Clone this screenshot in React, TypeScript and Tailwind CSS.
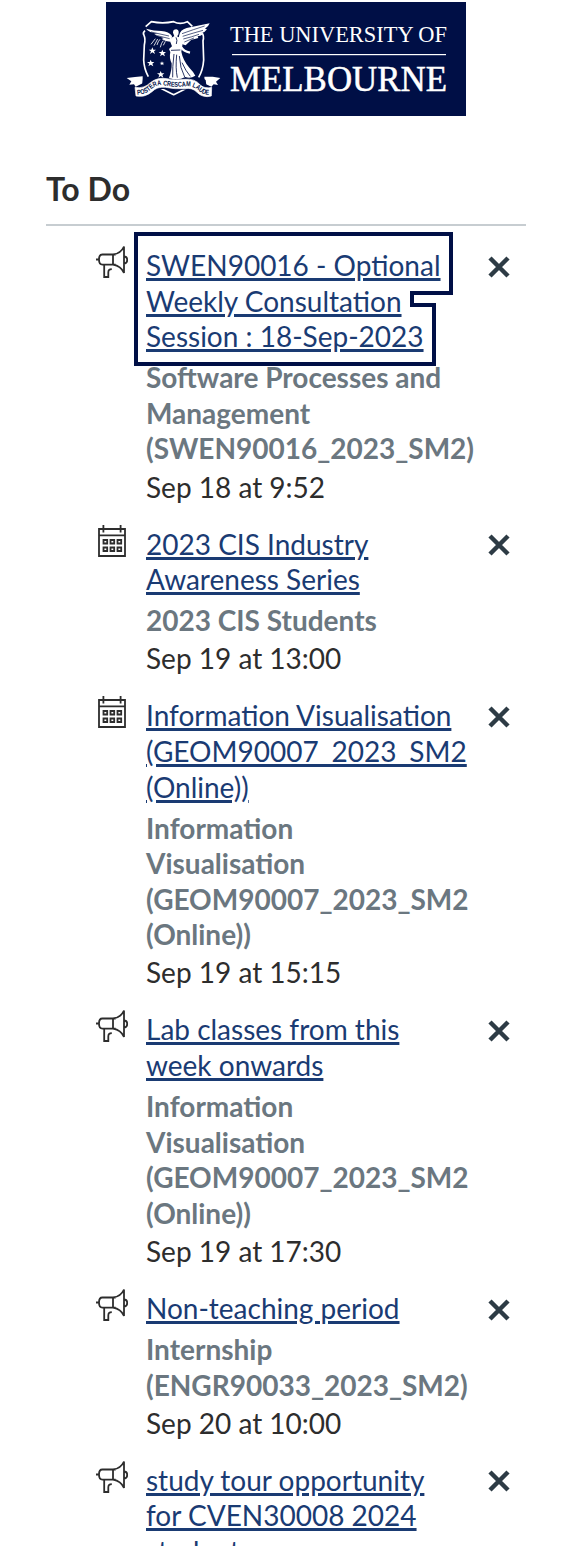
import React from "react";

type Kind = "announcement" | "event";

interface TodoItem {
  kind: Kind;
  title: string[];
  course: string[];
  date: string;
  focused?: boolean;
}

const items: TodoItem[] = [
  {
    kind: "announcement",
    title: ["SWEN90016 - Optional", "Weekly Consultation", "Session : 18-Sep-2023"],
    course: ["Software Processes and", "Management", "(SWEN90016_2023_SM2)"],
    date: "Sep 18 at 9:52",
    focused: true,
  },
  {
    kind: "event",
    title: ["2023 CIS Industry", "Awareness Series"],
    course: ["2023 CIS Students"],
    date: "Sep 19 at 13:00",
  },
  {
    kind: "event",
    title: ["Information Visualisation", "(GEOM90007_2023_SM2", "(Online))"],
    course: ["Information", "Visualisation", "(GEOM90007_2023_SM2", "(Online))"],
    date: "Sep 19 at 15:15",
  },
  {
    kind: "announcement",
    title: ["Lab classes from this", "week onwards"],
    course: ["Information", "Visualisation", "(GEOM90007_2023_SM2", "(Online))"],
    date: "Sep 19 at 17:30",
  },
  {
    kind: "announcement",
    title: ["Non-teaching period"],
    course: ["Internship", "(ENGR90033_2023_SM2)"],
    date: "Sep 20 at 10:00",
  },
  {
    kind: "announcement",
    title: ["study tour opportunity", "for CVEN30008 2024", "students"],
    course: [],
    date: "",
  },
];

function Logo() {
  return (
    <svg className="block h-[114px] w-[360px] bg-[#000f46]" viewBox="0 0 360 114" role="img" aria-label="The University of Melbourne">
      <g transform="translate(-6 -2) scale(0.33333)" fill="none" stroke="#fff" strokeLinejoin="round">
        <path d="M137 80 L154 65 Q188 72 221 65 Q240 75 262 65 L277 79 M135 92 Q127 99 132 106 Q137 116 133 135 L131 180 Q132 206 145 230 M306 98 Q313 108 309 122 L311 180 Q309 210 296 232 M182 265 L221 284 L260 265" strokeWidth="5" />
        <path d="M214 125 Q198 126 185 117 L191 114 Q174 110 163 103 L173 102 Q147 97 138 86 Q162 93 184 93 Q207 95 216 108 Z" fill="#fff" stroke="none" />
        <path d="M237 108 Q240 89 260 84 L329 70 Q325 81 315 86 L321 88 Q315 97 305 99 L309 103 Q301 109 293 109 L295 114 Q284 118 274 119 L257 136 L237 130 Z" fill="#fff" stroke="none" />
        <path d="M246 101 Q282 88 314 78 M248 109 Q280 99 309 91 M250 117 Q275 111 297 103 M253 126 L282 114 M153 96 L207 108 M172 107 L209 116" stroke="#000f46" strokeWidth="2" />
        <path d="M219 98 Q219 88 229 88 Q237 90 236 99 Q236 105 231 109 L240 113 Q250 122 247 137 L244 155 Q249 181 268 203 Q280 215 286 227 Q271 237 256 231 Q234 243 207 234 Q216 210 215 190 Q207 174 211 156 L207 147 L216 139 L211 126 Q211 113 223 109 Z" fill="#fff" stroke="none" />
        <path d="M244 142 Q250 154 270 158" strokeWidth="7" />
        <path d="M222 162 Q217 202 218 232 M230 164 Q226 205 232 233 M238 168 Q240 205 254 231 M246 188 Q257 213 271 229 M228 112 Q233 120 229 132 M213 151 L241 150" stroke="#000f46" strokeWidth="2.500" />
        <path d="M180 118 Q174 124 171 135 M190 122 Q184 128 181 142 M196 124 L190 136 M166 116 L153 133 M173 117 L162 137" strokeWidth="2.500" />
        <g fill="#fff" stroke="none">
          <path d="M157 142 l3 7 8 0 -6 5 3 8 -8-5 -7 5 3-8 -7-5 8 0z" />
          <path d="M187 149 l3 7 8 0 -6 5 3 8 -8-5 -7 5 3-8 -7-5 8 0z" />
          <path d="M152 179 l3 7 8 0 -6 5 3 8 -8-5 -7 5 3-8 -7-5 8 0z" />
          <path d="M186 184 l2 4 5 0 -4 3 2 5 -5-3 -4 3 1-5 -4-3 5 0z" />
          <path d="M182 213 l3 7 8 0 -6 5 3 8 -8-5 -7 5 3-8 -7-5 8 0z" />
        </g>
        <path d="M80 234 L105 231 L128 229 L128 250 L107 260 L102 253 L88 254 L94 244 Z" fill="#fff" stroke="none" />
        <path d="M361 234 L338 230 L313 230 L315 251 L334 260 L341 253 L354 255 L348 245 Z" fill="#fff" stroke="none" />
        <path d="M129 236 Q151 231 177 235 Q203 242 235 241 Q266 240 288 235 Q309 232 317 240 L319 255 L335 262 L334 288 Q316 294 298 284 Q278 270 256 269 Q220 268 188 267 Q168 267 149 282 Q130 294 108 288 L105 262 L126 257 Z" fill="#000f46" stroke="none" />
        <path d="M105 262 Q132 267 151 248 Q172 231 201 236 Q226 242 253 238 Q284 234 302 256 Q315 267 335 262 L334 288 Q309 295 291 277 Q278 262 254 266 Q225 268 196 262 Q172 259 156 275 Q135 293 108 288 Z" fill="#fff" stroke="#fff" strokeWidth="2" />
        <path id="motto" d="M112 284 Q137 284 153 268 Q170 252 194 256 Q222 263 255 259 Q280 256 298 274 Q313 287 331 283" stroke="none" />
        <text fill="#000f46" stroke="none" fontFamily="Liberation Sans" fontWeight="700" fontSize="21">
          <textPath href="#motto" textLength="229" lengthAdjust="spacingAndGlyphs">POSTERA CRESCAM LAUDE</textPath>
        </text>
      </g>
      <g fill="#fff" fontFamily="Liberation Serif">
        <text x="124" y="40.2" fontSize="24" textLength="217" lengthAdjust="spacingAndGlyphs">THE UNIVERSITY OF</text>
        <rect x="126" y="52" width="214" height="1.2" />
        <text x="124" y="89" fontSize="36" stroke="#fff" strokeWidth="0.5" textLength="217" lengthAdjust="spacingAndGlyphs">MELBOURNE</text>
      </g>
    </svg>
  );
}

function MegaphoneIcon() {
  return (
    <svg className="block h-8 w-8" viewBox="0 0 32 32" fill="none" stroke="#2d2d2d" strokeWidth="1.8">
      <path d="M19.7 8.500H6.400Q3 8.500 3 13.500T6.400 18.700H19.700M17 8.500V18.700M17 8.500Q25 7.500 28 0.500V27Q25 20 17 18.700M28 10.500Q31.200 10.500 31.200 14T28 17.500M0 13.500H3M8.200 19V31H12.300V26.500Q12.300 23.200 15.800 23.200" />
    </svg>
  );
}

function CalendarIcon() {
  return (
    <svg className="block h-8 w-8" viewBox="0 0 32 32" fill="none" stroke="#2d2d2d" strokeWidth="1.8">
      <path d="M3 4H29V31H3ZM3 10.300H29M7.400 0V7.500M24.600 0V7.500" />
      <path d="M7.500 15H11.200V18.500H7.500ZM14.500 15H18.200V18.500H14.500ZM21.500 15H25.200V18.500H21.500ZM7.500 22.500H11.200V26H7.500ZM14.500 22.500H18.200V26H14.500ZM21.500 22.500H25.200V26H21.500Z" />
    </svg>
  );
}

function FocusRing() {
  return (
    <svg className="pointer-events-none absolute -left-3 -top-4 h-[134px] w-[319px]" viewBox="0 0 319 134" fill="none" stroke="#000f46" strokeWidth="4">
      <path d="M2 2H317V61H278V73H300V132H2Z" />
    </svg>
  );
}

function Lines({ lines }: { lines: string[] }) {
  return (
    <>
      {lines.map((line) => (
        <span key={line} className="block">{line}</span>
      ))}
    </>
  );
}

function Row({ item }: { item: TodoItem }) {
  return (
    <li className="mb-[21.4px] flex items-start">
      <div className="-mt-[2px] w-[50px] shrink-0">{item.kind === "event" ? <CalendarIcon /> : <MegaphoneIcon />}</div>
      <div className="w-[341.5px] shrink-0 whitespace-nowrap">
        <div className="relative">
          <a href="#" className="text-[#1a3b73] underline decoration-[3px] underline-offset-2">
            <Lines lines={item.title} />
          </a>
          {item.focused && <FocusRing />}
        </div>
        {item.course.length > 0 && (
          <div className="mt-[5.5px] font-bold text-[#6b7780]">
            <Lines lines={item.course} />
          </div>
        )}
        <div className="mt-[2.5px] text-[#2d2d2d]">{item.date}</div>
      </div>
      <button type="button" aria-label="Dismiss" className="mt-[7.5px]">
        <svg className="block h-[22px] w-[22px]" viewBox="0 0 22 22" stroke="#2d3b45" strokeWidth="4.500" strokeLinecap="butt">
          <path d="M2 2L20 20M20 2L2 20" />
        </svg>
      </button>
    </li>
  );
}

export default function App() {
  return (
    <div className="h-[1546px] w-[572px] overflow-hidden bg-white pt-[2px] font-['Lato',sans-serif] text-[28px] leading-[35.600px]">
      <header className="ml-[106px]">
        <Logo />
      </header>
      <main className="mx-[46px]">
        <h2 className="mt-[50px] h-[60px] border-b-2 border-[#c7cdd1] pt-[5px] text-[32px] font-bold leading-[36px] text-[#2d2d2d]">To Do</h2>
        <ul className="ml-[50px] mt-[22px]">
          {items.map((item, i) => (
            <Row key={i} item={item} />
          ))}
        </ul>
      </main>
    </div>
  );
}
